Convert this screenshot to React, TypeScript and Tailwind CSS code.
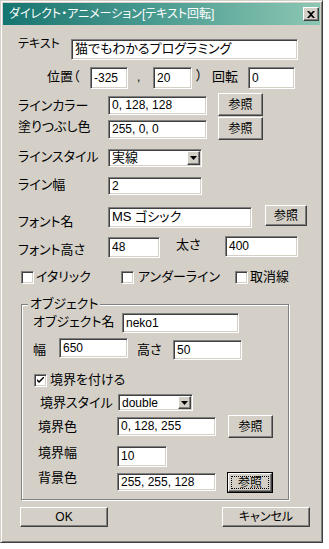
import React from "react";

const sunken =
  "bg-white border border-t-[#808080] border-l-[#808080] border-b-white border-r-white shadow-[inset_1px_1px_0_#404040,inset_-1px_-1px_0_#d4d0c8]";
const raised =
  "bg-[#d4d0c8] border border-t-white border-l-white border-b-[#404040] border-r-[#404040] shadow-[inset_-1px_-1px_0_#808080]";

function Field({ value, className }: { value: string; className: string }) {
  return (
    <div className={`${sunken} shrink-0 flex items-center pl-[3px] pb-[1px] leading-[14px] whitespace-nowrap overflow-hidden ${className}`}>
      {value}
    </div>
  );
}

function Combo({ value, className }: { value: string; className: string }) {
  return (
    <div className={`${sunken} shrink-0 flex items-stretch p-[1px] ${className}`}>
      <div className="flex-1 flex items-center pl-[2px] leading-[14px] whitespace-nowrap">{value}</div>
      <div className={`${raised} w-[13px] flex items-center justify-center`}>
        <svg width="7" height="4" viewBox="0 0 7 4">
          <path d="M0 0h7L3.5 4z" fill="#000" />
        </svg>
      </div>
    </div>
  );
}

function Btn({ label, className, focused }: { label: string; className: string; focused?: boolean }) {
  if (focused) {
    return (
      <div className={`shrink-0 border border-black ${className}`}>
        <div className={`${raised} h-full flex items-center justify-center p-[2px]`}>
          <div className="h-full w-full flex items-center justify-center border border-dotted border-black leading-[14px]">
            {label}
          </div>
        </div>
      </div>
    );
  }
  return (
    <div className={`${raised} shrink-0 flex items-center justify-center leading-[14px] ${className}`}>{label}</div>
  );
}

function Check({ checked, className }: { checked?: boolean; className: string }) {
  return (
    <div className={`${sunken} shrink-0 w-[13px] h-[13px] flex items-center justify-center ${className}`}>
      {checked && (
        <svg width="7" height="7" viewBox="0 0 7 7">
          <path d="M0 2v2l2 2 5-5V-1L2 4z" fill="#000" />
        </svg>
      )}
    </div>
  );
}

function Label({ text, className }: { text: string; className: string }) {
  return <div className={`shrink-0 leading-[14px] whitespace-nowrap ${className}`}>{text}</div>;
}

export default function App() {
  return (
    <div className="min-h-screen bg-white font-['Liberation_Sans','Noto_Sans_CJK_JP',sans-serif] text-[12px] text-black [font-feature-settings:'palt']">
      <div className="w-[323px] h-[543px] bg-[#d4d0c8] border border-t-[#d4d0c8] border-l-[#d4d0c8] border-b-[#404040] border-r-[#404040] shadow-[inset_1px_1px_0_#fff,inset_-1px_-1px_0_#808080] p-[2px] flex flex-col">
        {/* title bar */}
        <div className="h-[22px] shrink-0 flex items-center bg-gradient-to-r from-[#137570] via-[#4c9d92] to-[#8cc7b3] pl-[6px] pr-[1px]">
          <div className="flex-1 text-white leading-[14px] whitespace-nowrap">ダイレクト・アニメーション[テキスト回転]</div>
          <div className={`${raised} w-[16px] h-[14px] flex items-center justify-center`}>
            <svg width="8" height="7" viewBox="0 0 8 7">
              <path d="M0 0h2l2 2 2-2h2L5 3.5 8 7H6L4 5 2 7H0l3-3.5z" fill="#000" />
            </svg>
          </div>
        </div>

        <div className="flex flex-col">
          {/* テキスト */}
          <div className="h-[27px] mt-[12px] flex items-start">
            <Label text="テキスト" className="ml-[15px] w-[53px] mt-[0px]" />
            <Field value="猫でもわかるプログラミング" className="w-[227px] h-[21px] mt-[2px] text-[13px]" />
          </div>

          {/* 位置 */}
          <div className="h-[28px] flex items-start">
            <Label text="位置（" className="ml-[44px] w-[43px] mt-[6px] text-[13px]" />
            <Field value="-325" className="w-[38px] h-[22px] mt-[3px]" />
            <Label text="," className="w-[25px] mt-[6px] pl-[9px]" />
            <Field value="20" className="w-[39px] h-[22px] mt-[3px]" />
            <Label text="）" className="ml-[4px] w-[16px] mt-[5px] text-[13px]" />
            <Label text="回転" className="w-[36px] mt-[6px] text-[13px]" />
            <Field value="0" className="w-[47px] h-[22px] mt-[3px]" />
          </div>

          {/* ラインカラー */}
          <div className="h-[24px] flex items-start">
            <Label text="ラインカラー" className="ml-[15px] w-[90px] mt-[7px] text-[13px]" />
            <Field value="0, 128, 128" className="w-[99px] h-[19px] mt-[4px]" />
            <Btn label="参照" className="ml-[11px] w-[45px] h-[23px] mt-[1px]" />
          </div>

          {/* 塗りつぶし色 */}
          <div className="h-[25px] flex items-start">
            <Label text="塗りつぶし色" className="ml-[15px] w-[90px] mt-[4px] text-[13px]" />
            <Field value="255, 0, 0" className="w-[99px] h-[19px] mt-[4px]" />
            <Btn label="参照" className="ml-[11px] w-[45px] h-[23px] mt-[1px]" />
          </div>

          {/* ラインスタイル */}
          <div className="h-[31px] flex items-start">
            <Label text="ラインスタイル" className="ml-[15px] w-[90px] mt-[9px] text-[13px]" />
            <Combo value="実線" className="w-[94px] h-[18px] mt-[8px] text-[13px]" />
          </div>

          {/* ライン幅 */}
          <div className="h-[30px] flex items-start">
            <Label text="ライン幅" className="ml-[15px] w-[90px] mt-[6px] text-[13px]" />
            <Field value="2" className="w-[94px] h-[18px] mt-[5px]" />
          </div>

          {/* フォント名 */}
          <div className="h-[32px] flex items-start">
            <Label text="フォント名" className="ml-[15px] w-[90px] mt-[13px] text-[13px]" />
            <Field value="MS ゴシック" className="w-[144px] h-[21px] mt-[5px] text-[13px]" />
            <Btn label="参照" className="ml-[13px] w-[42px] h-[21px] mt-[3px]" />
          </div>

          {/* フォント高さ */}
          <div className="h-[30px] flex items-start">
            <Label text="フォント高さ" className="ml-[15px] w-[90px] mt-[9px] text-[13px]" />
            <Field value="48" className="w-[52px] h-[21px] mt-[3px]" />
            <Label text="太さ" className="ml-[16px] w-[49px] mt-[4px] text-[13px]" />
            <Field value="400" className="w-[73px] h-[21px] mt-[2px]" />
          </div>

          {/* checkboxes */}
          <div className="h-[26px] flex items-start">
            <div className="ml-[18px] w-[100px] flex items-start">
              <Check className="mt-[7px]" />
              <Label text="イタリック" className="ml-[2px] mt-[6px] text-[13px]" />
            </div>
            <div className="w-[114px] flex items-start">
              <Check className="mt-[7px]" />
              <Label text="アンダーライン" className="ml-[4px] mt-[6px] text-[13px]" />
            </div>
            <div className="flex items-start">
              <Check className="mt-[7px]" />
              <Label text="取消線" className="ml-[2px] mt-[6px] text-[13px]" />
            </div>
          </div>

          {/* オブジェクト group */}
          <fieldset className="ml-[18px] mt-[7px] w-[268px] border border-[#808080] shadow-[inset_1px_1px_0_#fff,1px_1px_0_#fff] p-0 m-0">
            <legend className="ml-[6px] px-[2px] leading-[14px] bg-[#d4d0c8] text-[13px]">オブジェクト</legend>

            <div className="h-[25px] flex items-start">
              <Label text="オブジェクト名" className="ml-[11px] w-[89px] mt-[4px] text-[13px]" />
              <Field value="neko1" className="w-[117px] h-[20px] mt-[2px]" />
            </div>

            <div className="h-[28px] flex items-start">
              <Label text="幅" className="ml-[11px] w-[26px] mt-[7px] text-[13px]" />
              <Field value="650" className="w-[69px] h-[20px] mt-[2px]" />
              <Label text="高さ" className="ml-[9px] w-[36px] mt-[7px] text-[13px]" />
              <Field value="50" className="w-[69px] h-[20px] mt-[4px]" />
            </div>

            <div className="h-[26px] flex items-start">
              <Check checked className="ml-[12px] mt-[10px]" />
              <Label text="境界を付ける" className="ml-[3px] mt-[9px] text-[13px]" />
            </div>

            <div className="h-[24px] flex items-start">
              <Label text="境界スタイル" className="ml-[18px] w-[78px] mt-[6px] text-[13px]" />
              <Combo value="double" className="w-[75px] h-[17px] mt-[4px]" />
            </div>

            <div className="h-[28px] flex items-start">
              <Label text="境界色" className="ml-[16px] w-[79px] mt-[6px] text-[13px]" />
              <Field value="0, 128, 255" className="w-[99px] h-[19px] mt-[3px]" />
              <Btn label="参照" className="ml-[12px] w-[45px] h-[23px] mt-[1px]" />
            </div>

            <div className="h-[27px] flex items-start">
              <Label text="境界幅" className="ml-[16px] w-[79px] mt-[4px] text-[13px]" />
              <Field value="10" className="w-[50px] h-[21px] mt-[4px]" />
            </div>

            <div className="h-[30px] flex items-start">
              <Label text="背景色" className="ml-[16px] w-[79px] mt-[2px] text-[13px]" />
              <Field value="255, 255, 128" className="w-[99px] h-[18px] mt-[4px]" />
              <Btn label="参照" focused className="ml-[11px] w-[46px] h-[21px] mt-[3px]" />
            </div>
          </fieldset>

          {/* OK / Cancel */}
          <div className="mt-[7px] flex items-start">
            <Btn label="OK" className="ml-[17px] w-[88px] h-[20px]" />
            <Btn label="キャンセル" className="ml-[114px] w-[88px] h-[20px]" />
          </div>
        </div>
      </div>
    </div>
  );
}
